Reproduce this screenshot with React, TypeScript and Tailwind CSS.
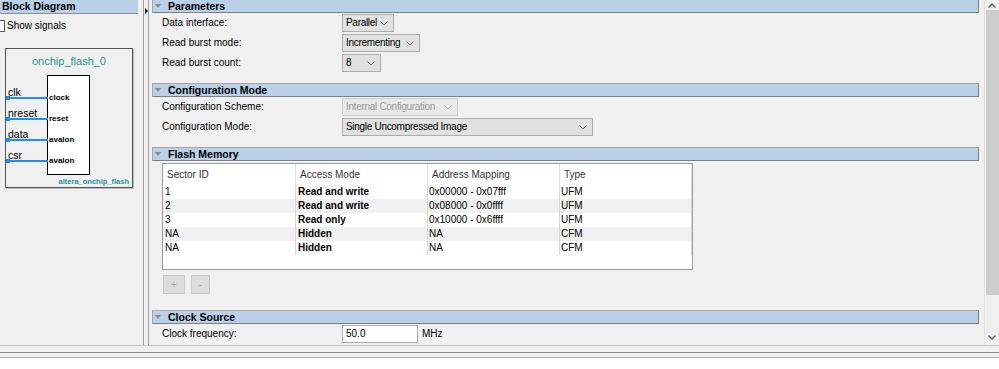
import React from 'react';

const Chevron = ({ color = '#6b6b6b' }: { color?: string }) => (
  <svg width="8" height="5" viewBox="0 0 8 5" className="shrink-0">
    <polyline points="0.5,0.5 4,4 7.5,0.5" fill="none" stroke={color} strokeWidth="1" />
  </svg>
);

function Dropdown({ text, className, disabled }: { text: string; className: string; disabled?: boolean }) {
  return (
    <div
      className={
        'flex h-[18px] items-center justify-between border pl-[3px] pr-[5px] tracking-[-0.3px] ' +
        (disabled ? 'border-[#cfcfcf] bg-[#e9e9e9] text-[#9a9a9a] ' : 'border-[#adadad] bg-[#e1e1e1] text-black ') +
        className
      }
    >
      <span className="whitespace-nowrap">{text}</span>
      <Chevron color={disabled ? '#b0b0b0' : '#6b6b6b'} />
    </div>
  );
}

function SectionBar({ title }: { title: string }) {
  return (
    <div className="flex h-[14px] items-center border border-[#a8a8a8] border-b-[#7f7f7f] border-r-[#7f7f7f] bg-[#b9d0e7]">
      <svg width="6" height="4" viewBox="0 0 6 4" className="ml-[2px]">
        <polygon points="0,0 6,0 3,4" fill="#8a8a8a" />
      </svg>
      <span className="ml-[7px] text-[10.5px] font-bold leading-none text-black">{title}</span>
    </div>
  );
}

function Row({ label, children }: { label: string; children: React.ReactNode }) {
  return (
    <div className="flex h-[20px] items-center pl-[10px]">
      <span className="w-[180px] shrink-0 whitespace-nowrap">{label}</span>
      {children}
    </div>
  );
}

const sectors = [
  { id: '1', mode: 'Read and write', addr: '0x00000 - 0x07fff', type: 'UFM' },
  { id: '2', mode: 'Read and write', addr: '0x08000 - 0x0ffff', type: 'UFM' },
  { id: '3', mode: 'Read only', addr: '0x10000 - 0x6ffff', type: 'UFM' },
  { id: 'NA', mode: 'Hidden', addr: 'NA', type: 'CFM' },
  { id: 'NA', mode: 'Hidden', addr: 'NA', type: 'CFM' },
];

const signals = [
  { name: 'clk', port: 'clock', y: 'top-[48px]', ty: 'top-[37px]', py: 'top-[43px]' },
  { name: 'nreset', port: 'reset', y: 'top-[69px]', ty: 'top-[58px]', py: 'top-[64px]' },
  { name: 'data', port: 'avalon', y: 'top-[90px]', ty: 'top-[79px]', py: 'top-[85px]' },
  { name: 'csr', port: 'avalon', y: 'top-[111px]', ty: 'top-[100px]', py: 'top-[106px]' },
];

function BlockDiagram() {
  return (
    <div className="relative ml-[5px] mt-[16px] h-[140px] w-[128px] border border-[#555] shadow-[1px_1px_0_#bdbdbd]">
      <div className="pt-[5px] text-center text-[11px] leading-[14px] text-[#2a9494]">onchip_flash_0</div>
      <div className="absolute left-[41px] top-[26px] h-[100px] w-[43px] border border-black bg-white" />
      {signals.map((s) => (
        <React.Fragment key={s.name + s.y}>
          <div className={'absolute left-[2px] text-[10.5px] leading-[12px] ' + s.ty}>{s.name}</div>
          <div className={'absolute left-0 h-[2px] w-[42px] bg-[#1e8cff] ' + s.y} />
          <div className={'absolute left-0 h-[4px] w-[4px] -translate-y-[1px] bg-[#1e8cff] ' + s.y} />
          <div className={'absolute left-[43px] text-[8px] font-bold leading-[12px] ' + s.py}>{s.port}</div>
        </React.Fragment>
      ))}
      <div className="absolute right-[3px] top-[128px] text-[7.5px] font-bold leading-[10px] text-[#2a9494]">
        altera_onchip_flash
      </div>
    </div>
  );
}

export default function App() {
  return (
    <div className="flex h-[369px] w-[999px] flex-col overflow-hidden bg-white font-['Liberation_Sans',Arial,sans-serif] text-[10px] leading-none text-black">
      <div className="flex h-[345px] bg-[#f0f0f0]">
        {/* Block diagram panel */}
        <div className="w-[144px] shrink-0 border-r border-[#a0a0a0]">
          <div className="flex h-[14px] w-[138px] items-center border-b border-[#8f8f8f] bg-[#b9d0e7] pl-[2px] text-[10.5px] font-bold">
            Block Diagram
          </div>
          <div className="mt-[6px] flex items-center">
            <div className="ml-[-7px] h-[12px] w-[12px] border border-[#555] bg-white" />
            <span className="ml-[2px] text-[10px]">Show signals</span>
          </div>
          <BlockDiagram />
        </div>

        {/* splitter */}
        <div className="w-[4px] shrink-0 pt-[8px]">
          <svg width="4" height="6" viewBox="0 0 4 6" className="ml-[1px]">
            <polygon points="0,0 3,3 0,6" fill="#000" />
          </svg>
        </div>

        {/* Parameter panel */}
        <div className="flex flex-1 border-l border-[#a0a0a0]">
          <div className="flex-1 pl-[3px] pr-[5px]">
            <div className="-mt-[1px]">
              <SectionBar title="Parameters" />
              <Row label="Data interface:">
                <Dropdown text="Parallel" className="w-[52px]" />
              </Row>
              <Row label="Read burst mode:">
                <Dropdown text="Incrementing" className="w-[78px]" />
              </Row>
              <Row label="Read burst count:">
                <Dropdown text="8" className="w-[39px]" />
              </Row>
            </div>

            <div className="mt-[10px]">
              <SectionBar title="Configuration Mode" />
              <Row label="Configuration Scheme:">
                <Dropdown text="Internal Configuration" className="w-[116px]" disabled />
              </Row>
              <Row label="Configuration Mode:">
                <Dropdown text="Single Uncompressed Image" className="w-[251px]" />
              </Row>
            </div>

            <div className="mt-[10px]">
              <SectionBar title="Flash Memory" />
              <div className="ml-[10px] mt-[2px] h-[107px] w-[531px] border border-[#9a9a9a] bg-white">
                <div className="grid h-[21px] grid-cols-[133px_132px_132px_132px] items-center text-[#333]">
                  {['Sector ID', 'Access Mode', 'Address Mapping', 'Type'].map((h) => (
                    <div key={h} className="flex h-full items-center border-r border-[#e3e3e3] pl-[4px]">
                      {h}
                    </div>
                  ))}
                </div>
                {sectors.map((s, i) => (
                  <div
                    key={i}
                    className={'grid h-[14px] grid-cols-[133px_132px_132px_132px] items-center ' + (i % 2 === 1 ? 'bg-[#f0f0f0]' : 'bg-white')}
                  >
                    <div className="flex h-full items-center border-r border-[#d8d8d8] pl-[2px]">{s.id}</div>
                    <div className="flex h-full items-center border-r border-[#d8d8d8] pl-[2px] font-bold">{s.mode}</div>
                    <div className="flex h-full items-center border-r border-[#d8d8d8] pl-[1px]">{s.addr}</div>
                    <div className="flex h-full items-center border-r border-[#d8d8d8] pl-[1px]">{s.type}</div>
                  </div>
                ))}
              </div>
              <div className="ml-[11px] mt-[5px] flex gap-[6px]">
                <div className="flex h-[19px] w-[22px] items-center justify-center border border-[#c8c8c8] bg-[#dcdcdc] text-[#a6a6a6]">+</div>
                <div className="flex h-[19px] w-[19px] items-center justify-center border border-[#c8c8c8] bg-[#dcdcdc] text-[#a6a6a6]">-</div>
              </div>
            </div>

            <div className="mt-[16px]">
              <SectionBar title="Clock Source" />
              <Row label="Clock frequency:">
                <div className="flex h-[18px] w-[76px] items-center border border-[#abadb3] bg-white pl-[3px]">50.0</div>
                <span className="ml-[4px]">MHz</span>
              </Row>
            </div>
          </div>

          {/* scrollbar */}
          <div className="flex w-[15px] shrink-0 flex-col items-center border-l border-[#e2e2e2]">
            <div className="flex h-[10px] items-center">
              <svg width="8" height="5" viewBox="0 0 8 5">
                <polyline points="0.5,4.5 4,1 7.5,4.5" fill="none" stroke="#555" strokeWidth="1.3" />
              </svg>
            </div>
            <div className="h-[285px] w-[13px] bg-[#cdcdcd]" />
            <div className="flex-1" />
            <div className="mb-[3px] flex h-[10px] items-center">
              <svg width="8" height="5" viewBox="0 0 8 5">
                <polyline points="0.5,0.5 4,4 7.5,0.5" fill="none" stroke="#555" strokeWidth="1.3" />
              </svg>
            </div>
          </div>
        </div>
      </div>
      <div className="h-[1px] bg-[#c4c4c4]" />
      <div className="h-[6px] bg-[#f0f0f0]" />
      <div className="h-[1px] bg-[#8c8c8c]" />
      <div className="h-[4px] bg-[#f0f0f0]" />
      <div className="h-[1px] bg-[#a8a8a8]" />
    </div>
  );
}
